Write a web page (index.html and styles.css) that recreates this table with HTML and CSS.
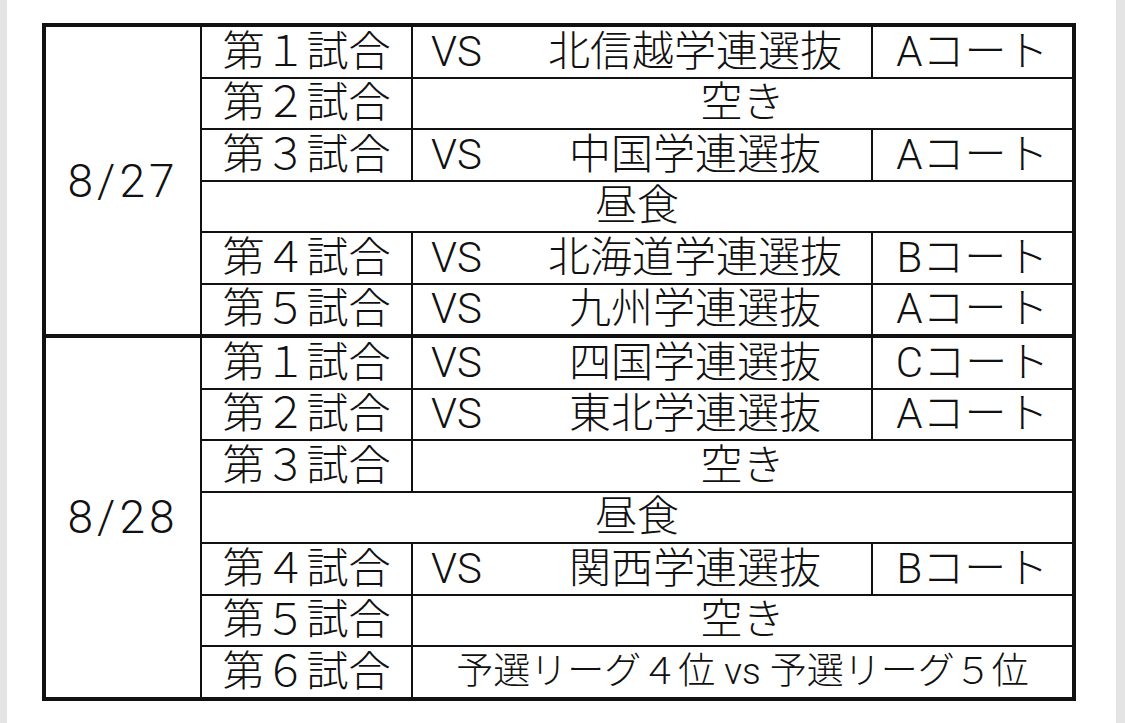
FILE: index.html
```html
<!DOCTYPE html>
<html lang="ja">
<head>
<meta charset="utf-8">
<title>日程表</title>
<link rel="stylesheet" href="styles.css">
</head>
<body>
<div class="page">
  <table class="schedule">
    <colgroup>
      <col class="c-date">
      <col class="c-match">
      <col class="c-team">
      <col class="c-court">
    </colgroup>
    <tbody>
      <tr>
        <td class="date" rowspan="6">8/27</td>
        <td>第１試合</td>
        <td class="team"><div class="vsrow"><span class="vs">VS</span><span class="name">北信越学連選抜</span></div></td>
        <td>Aコート</td>
      </tr>
      <tr>
        <td>第２試合</td>
        <td colspan="2">空き</td>
      </tr>
      <tr>
        <td>第３試合</td>
        <td class="team"><div class="vsrow"><span class="vs">VS</span><span class="name">中国学連選抜</span></div></td>
        <td>Aコート</td>
      </tr>
      <tr>
        <td colspan="3">昼食</td>
      </tr>
      <tr>
        <td>第４試合</td>
        <td class="team"><div class="vsrow"><span class="vs">VS</span><span class="name">北海道学連選抜</span></div></td>
        <td>Bコート</td>
      </tr>
      <tr>
        <td>第５試合</td>
        <td class="team"><div class="vsrow"><span class="vs">VS</span><span class="name">九州学連選抜</span></div></td>
        <td>Aコート</td>
      </tr>
      <tr class="day-start">
        <td class="date" rowspan="7">8/28</td>
        <td>第１試合</td>
        <td class="team"><div class="vsrow"><span class="vs">VS</span><span class="name">四国学連選抜</span></div></td>
        <td>Cコート</td>
      </tr>
      <tr>
        <td>第２試合</td>
        <td class="team"><div class="vsrow"><span class="vs">VS</span><span class="name">東北学連選抜</span></div></td>
        <td>Aコート</td>
      </tr>
      <tr>
        <td>第３試合</td>
        <td colspan="2">空き</td>
      </tr>
      <tr>
        <td colspan="3">昼食</td>
      </tr>
      <tr>
        <td>第４試合</td>
        <td class="team"><div class="vsrow"><span class="vs">VS</span><span class="name">関西学連選抜</span></div></td>
        <td>Bコート</td>
      </tr>
      <tr>
        <td>第５試合</td>
        <td colspan="2">空き</td>
      </tr>
      <tr>
        <td>第６試合</td>
        <td colspan="2" class="final">予選リーグ４位 vs 予選リーグ５位</td>
      </tr>
    </tbody>
  </table>
</div>
</body>
</html>
```

FILE: styles.css
```css
html, body {
  margin: 0;
  padding: 0;
}

body {
  background: #e4e4e4;
  font-family: "Roboto", "Noto Sans CJK JP", sans-serif;
  color: #111;
}

.page {
  background: #ffffff;
  margin: 0 9px 0 7px;
  height: 723px;
  padding: 23px 0 0 35px;
  box-sizing: border-box;
}

.schedule {
  border-collapse: collapse;
  table-layout: fixed;
  border: 4px solid #111;
  width: 1034px;
}

.c-date { width: 157px; }
.c-match { width: 211px; }
.c-team { width: 460px; }
.c-court { width: 202px; }

.schedule td {
  border: 2px solid #111;
  height: 49.5px;
  padding: 0;
  text-align: center;
  vertical-align: middle;
  font-size: 42px;
  font-weight: 300;
  line-height: 44px;
  white-space: nowrap;
}

.schedule tr.day-start td {
  border-top: 4px solid #111;
}

.schedule td.date {
  font-size: 46px;
  letter-spacing: 4px;
}

.vsrow {
  display: flex;
  align-items: center;
}

.vs {
  width: 88px;
  padding-left: 18px;
  text-align: left;
}

.name {
  flex: 1;
  text-align: center;
}

.schedule td.final {
  font-size: 37px;
}
```
